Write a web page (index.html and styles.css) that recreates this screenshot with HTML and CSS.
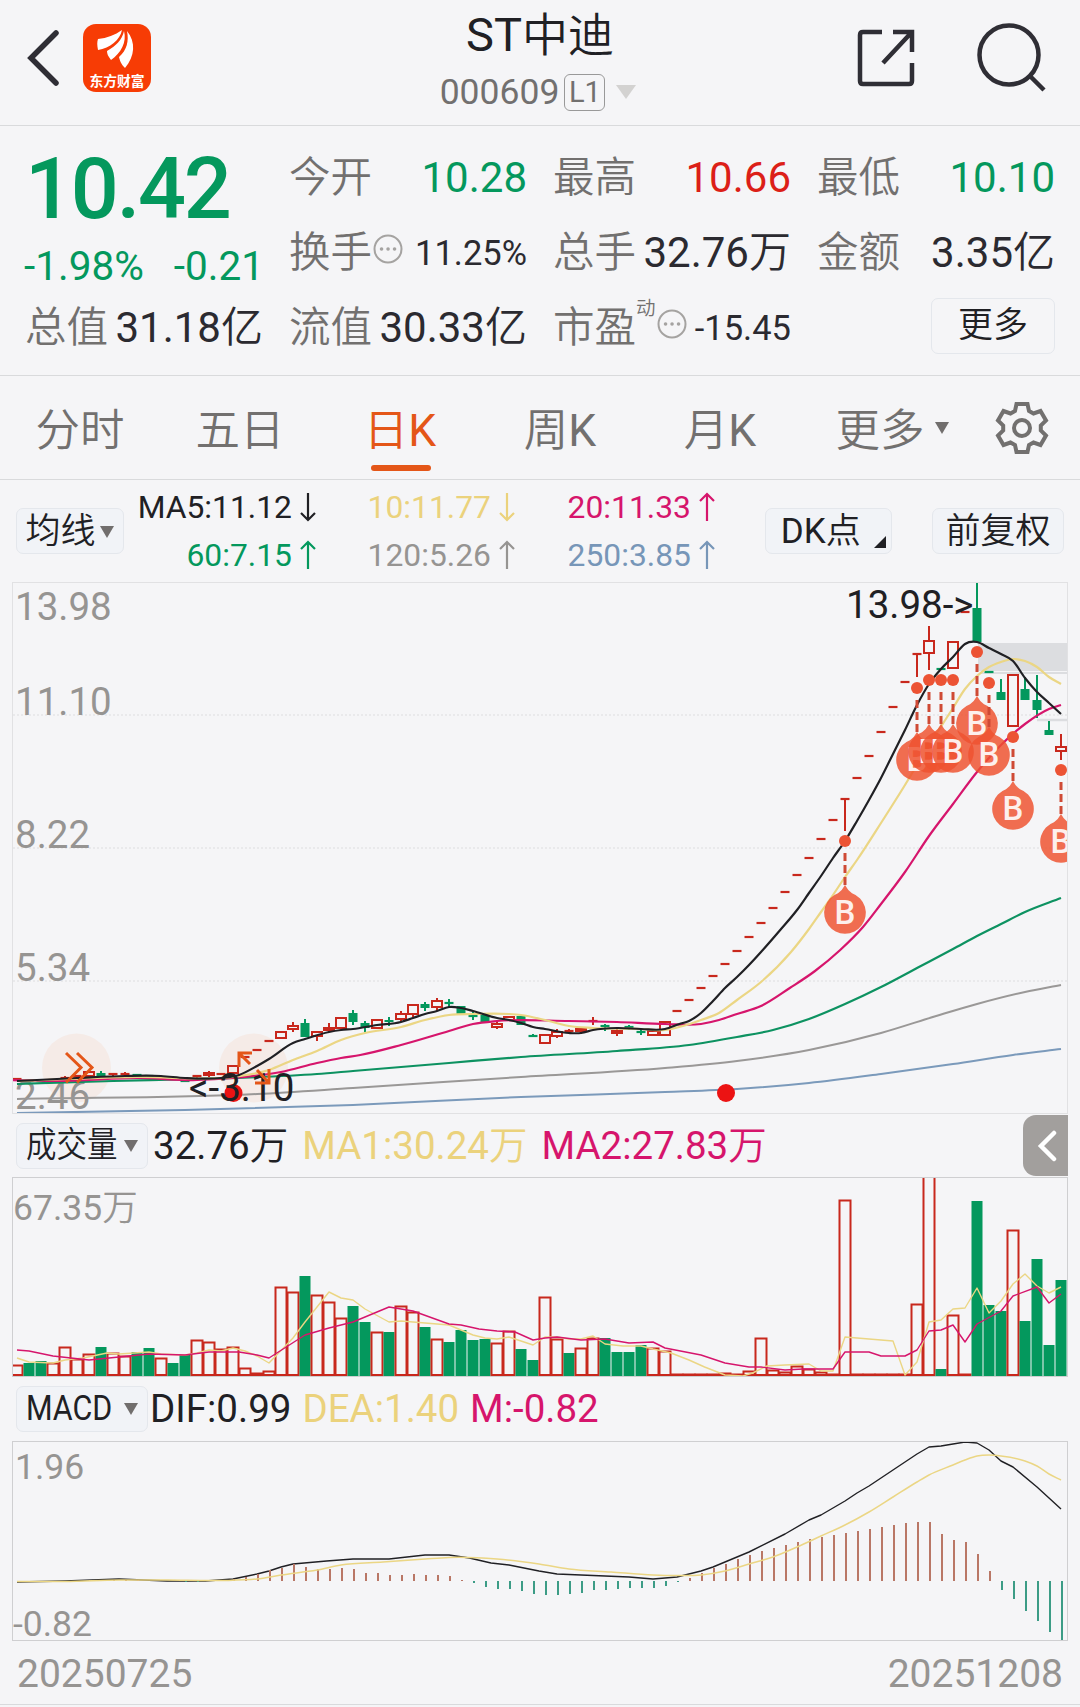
FILE: index.html
```
<!DOCTYPE html>
<html lang="zh-CN">
<head>
    <meta charset="utf-8">
    <title>ST中迪 000609</title>
    <link rel="stylesheet" href="styles.css">
</head>
<body>
    <header class="header">
        <div class="header-left">
            <svg class="back" width="34" height="60" viewBox="0 0 34 60"><path d="M30 5 5 30 30 55"/></svg>
            <div class="logo">
                <svg width="68" height="50" viewBox="0 0 68 50">
                    <path d="M15 26c-1-5-1-8 0-11 9-1 17-4 24-9-2 10-12 18-24 20z"/>
                    <path d="M28 36c-3-4-4-6-4-9 9-5 15-11 17-20 3 11-3 22-13 29z"/>
                    <path d="M42 44c-4-4-5-7-6-11 8-7 10-16 8-26 9 11 8 25-2 37z"/>
                </svg>
                <span>东方财富</span>
            </div>
        </div>
        <div class="title">
            <h1>ST<i>中迪</i></h1>
            <div class="code">000609<span class="level">L1</span><b class="tri"></b></div>
        </div>
        <div class="header-right">
            <svg width="64" height="64" viewBox="0 0 64 64"><path d="M27 6H8q-3 0-3 3v46q0 3 3 3h46q3 0 3-3V37M38 6h19v20M56 7 28 37"/></svg>
            <svg width="72" height="72" viewBox="0 0 72 72"><circle cx="33" cy="33" r="29.5"/><path d="M53 53 68 68"/></svg>
        </div>
    </header>

    <section class="quote">
        <div class="now">
            <div class="price">10.42</div>
            <div class="change"><span>-1.98%</span><span>-0.21</span></div>
        </div>
        <div class="cell"><i>今开</i><em class="green">10.28</em></div>
        <div class="cell"><i>最高</i><em class="red">10.66</em></div>
        <div class="cell"><i>最低</i><em class="green">10.10</em></div>
        <div class="cell"><i>换手</i><svg class="tip" width="30" height="30" viewBox="0 0 30 30"><circle cx="15" cy="15" r="13.5"/><path d="M8.500 15h.1M15 15h.1M21.500 15h.1"/></svg><em class="small">11.25%</em></div>
        <div class="cell"><i>总手</i><em>32.76<i>万</i></em></div>
        <div class="cell"><i>金额</i><em>3.35<i>亿</i></em></div>
        <div class="cell"><i>总值</i><em>31.18<i>亿</i></em></div>
        <div class="cell"><i>流值</i><em>30.33<i>亿</i></em></div>
        <div class="cell"><i>市盈</i><sup>动</sup><svg class="tip" width="30" height="30" viewBox="0 0 30 30"><circle cx="15" cy="15" r="13.5"/><path d="M8.500 15h.1M15 15h.1M21.500 15h.1"/></svg><em class="small">-15.45</em></div>
        <div class="cell"><button class="btn more">更多</button></div>
    </section>

    <nav class="tabs">
        <a><i>分时</i></a>
        <a><i>五日</i></a>
        <a class="active"><i>日</i>K</a>
        <a><i>周</i>K</a>
        <a><i>月</i>K</a>
        <a><i>更多</i><b class="tri"></b></a>
        <div class="gear">
            <svg width="54" height="54" viewBox="0 0 54 54"><path d="M21.500 3h11l1.500 7 4.500 2.500 7-2.500 5.500 9.500-5.200 5v5l5.200 5-5.500 9.500-7-2.500-4.500 2.500-1.500 7h-11l-1.500-7-4.500-2.500-7 2.500L3 34.500l5.200-5v-5L3 19.500 8.500 10l7 2.500L20 10z"/><circle cx="27" cy="27" r="8"/></svg>
        </div>
    </nav>

    <section class="ma">
        <button class="btn">均线<b class="tri"></b></button>
        <div class="ma-list">
            <span class="black">MA5:11.12<svg class="arrow down" viewBox="0 0 16 30"><path d="M8 29V2M1 9l7-7 7 7"/></svg></span>
            <span class="yellow">10:11.77<svg class="arrow down" viewBox="0 0 16 30"><path d="M8 29V2M1 9l7-7 7 7"/></svg></span>
            <span class="pink">20:11.33<svg class="arrow" viewBox="0 0 16 30"><path d="M8 29V2M1 9l7-7 7 7"/></svg></span>
            <span class="green">60:7.15<svg class="arrow" viewBox="0 0 16 30"><path d="M8 29V2M1 9l7-7 7 7"/></svg></span>
            <span class="gray">120:5.26<svg class="arrow" viewBox="0 0 16 30"><path d="M8 29V2M1 9l7-7 7 7"/></svg></span>
            <span class="blue">250:3.85<svg class="arrow" viewBox="0 0 16 30"><path d="M8 29V2M1 9l7-7 7 7"/></svg></span>
        </div>
        <button class="btn dk">DK<i>点</i><b class="corner"></b></button>
        <button class="btn">前复权</button>
    </section>

    <div class="chart price-chart"><svg id="price" viewBox="13 1 1054 530"></svg></div>

    <section class="bar">
        <button class="btn"><span class="narrow"><i>成交量</i></span><b class="tri"></b></button>
        <span class="black">32.76<i>万</i></span>
        <span class="yellow">MA1:30.24<i>万</i></span>
        <span class="pink">MA2:27.83<i>万</i></span>
        <div class="fold"><svg width="20" height="32" viewBox="0 0 20 32"><path d="M17 3 4 16 17 29"/></svg></div>
    </section>
    <div class="chart"><svg id="volume" viewBox="13 1 1054 198"></svg></div>

    <section class="bar macd-bar">
        <button class="btn"><span class="narrow">MACD</span><b class="tri"></b></button>
        <span class="black">DIF:0.99</span>
        <span class="yellow">DEA:1.40</span>
        <span class="pink">M:-0.82</span>
    </section>
    <div class="chart"><svg id="macd" viewBox="13 1 1054 198"></svg></div>

    <footer class="dates"><span>20250725</span><span>20251208</span></footer>
    <script src="chart.js"></script>
</body>
</html>
```
FILE: styles.css
```
* {
    padding: 0;
    margin: 0;
    box-sizing: border-box;
}
body {
    width: 1080px;
    height: 1707px;
    overflow: hidden;
    background-color: #f5f5f7;
    color: #2b2a30;
    font-family: Roboto, "Noto Sans CJK SC", sans-serif;
}
i, em {
    font-style: normal;
}
i, .btn, sup {
    font-weight: 350;
}
svg {
    display: block;
    fill: none;
    flex: none;
}
.black { color: #202024; }
.yellow { color: #ebd27c; }
.pink { color: #d6156c; }
.green { color: #04985d; }
.red { color: #dc1f18; }
.gray { color: #969492; }
.blue { color: #7796b8; }

.tri {
    border: 7.5px solid transparent;
    border-top: 12px solid #716e6d;
    border-bottom: 0;
}
.btn {
    height: 46px;
    display: flex;
    align-items: center;
    justify-content: center;
    border: 1px solid #e4e7ec;
    border-radius: 7px;
    background-color: #f1f3f7;
    color: #202024;
    font-family: inherit;
    font-size: 35px;
    line-height: 44px;
    white-space: nowrap;
}

/* header */
.header {
    height: 126px;
    display: grid;
    grid-template-columns: 300px 480px 300px;
    border-bottom: 1px solid #d9dadc;
}
.header-left {
    display: flex;
    align-items: flex-start;
    padding: 24px 0 0 26px;
}
.back {
    margin-top: 4px;
    margin-right: 23px;
    stroke: #2f2e35;
    stroke-width: 5.5;
    stroke-linecap: round;
}
.logo {
    width: 68px;
    height: 68px;
    border-radius: 13px;
    background-color: #f73c05;
    color: #fff;
    text-align: center;
}
.logo svg {
    fill: #fff;
}
.logo span {
    display: block;
    font-size: 13.800px;
    font-weight: 700;
    line-height: 15px;
}
.title {
    text-align: center;
}
.title h1 {
    height: 70px;
    font-size: 47px;
    line-height: 70px;
    font-weight: 400;
    color: #202024;
}
.title h1 i {
    font-size: 46px;
}
.code {
    display: flex;
    align-items: center;
    justify-content: center;
    height: 44px;
    margin-left: -4px;
    font-size: 35.500px;
    color: #72706f;
}
.level {
    width: 41px;
    height: 37px;
    margin-left: 5px;
    border: 1.500px solid #999;
    border-radius: 6px;
    font-size: 29px;
    line-height: 35px;
}
.code .tri {
    margin-left: 11px;
    border-width: 14px 10.500px 0;
    border-top-color: #d3d2d1;
}
.header-right {
    display: flex;
    padding: 22px 0 0 75px;
    gap: 57px;
}
.header-right svg {
    stroke: #2f2e35;
    stroke-width: 4.500;
}
.header-right svg:first-child {
    margin-top: 4px;
}

/* quote */
.quote {
    height: 250px;
    padding: 14px 24px 0 25px;
    display: grid;
    grid-template-columns: repeat(4, 238px);
    grid-template-rows: 75px 75px 76px;
    column-gap: 26px;
    border-bottom: 1px solid #d9dadc;
}
.now {
    grid-row: span 2;
    color: #04985d;
}
.price {
    height: 98px;
    line-height: 100px;
    font-size: 84.500px;
    font-weight: 500;
    letter-spacing: -2.200px;
}
.change {
    display: flex;
    justify-content: space-between;
    margin: 4px -1px 0 -1px;
    line-height: 48px;
    font-size: 40.500px;
}
.cell {
    display: flex;
    align-items: center;
    font-size: 42px;
    line-height: 70px;
    white-space: nowrap;
}
.cell > i {
    color: #72706f;
    font-size: 41.500px;
}
.cell em {
    margin-left: auto;
}
.cell em.small {
    font-size: 34.500px;
}
.cell sup {
    align-self: flex-start;
    font-size: 19.500px;
    line-height: 20px;
    color: #72706f;
    margin-top: 9px;
}
.tip {
    margin: -8px 0 0 1px;
    stroke: #a5a3a1;
    stroke-width: 2;
    stroke-linecap: round;
}
.tip path {
    stroke-width: 3.500;
}
.more {
    width: 124px;
    height: 56px;
    margin: -5px 0 0 auto;
    background: none;
}

/* tabs */
.tabs {
    height: 104px;
    display: flex;
    border-bottom: 1px solid #d9dadc;
    color: #72706f;
    font-size: 44.500px;
    line-height: 110px;
}
.tabs a {
    position: relative;
    width: 160px;
    text-align: center;
}
.tabs a .tri {
    position: absolute;
    left: 135px;
    top: 46px;
}
.tabs .active {
    color: #e45618;
}
.active::after {
    content: "";
    position: absolute;
    left: 51px;
    top: 89px;
    width: 60px;
    height: 6px;
    border-radius: 3px;
    background-color: #e45618;
}
.gear {
    width: 120px;
    padding: 25px 0 0 35px;
}
.gear svg {
    stroke: #72706f;
    stroke-width: 4;
}

/* moving averages */
.ma {
    height: 102px;
    display: flex;
    align-items: center;
    padding: 0 16px;
}
.ma > .btn {
    padding-top: 2px;
}
.ma > .btn:first-child {
    width: 108px;
}
.ma > .btn:last-child {
    width: 132px;
    margin-left: 40px;
}
.ma .tri {
    margin-left: 5px;
}
.ma > .dk {
    position: relative;
    width: 127px;
    padding-right: 16px;
    font-weight: 400;
}
.corner {
    position: absolute;
    right: 5px;
    bottom: 5px;
    border-left: 12px solid transparent;
    border-bottom: 12px solid #202024;
}
.ma-list {
    width: 642px;
    display: grid;
    grid-template-columns: 192px 199px 200px;
    grid-template-rows: 48px 48px;
    font-size: 31.800px;
    line-height: 50px;
}
.ma-list span {
    display: flex;
    align-items: center;
    justify-content: flex-end;
}
.arrow {
    width: 16px;
    height: 30px;
    margin-left: 8px;
    stroke: currentColor;
    stroke-width: 2.200;
}
.down {
    transform: rotate(180deg);
}

/* charts */
.chart {
    height: 200px;
    margin: 0 12px;
    border: 1px solid #cfcfd1;
}
.price-chart {
    height: 532px;
    border: 1px solid #e1e1e3;
}
.chart svg {
    width: 1054px;
    height: 100%;
}
.chart text {
    font-size: 35.500px;
    fill: #969492;
}
.price-chart text {
    font-size: 38.500px;
}
.chart .mark {
    fill: #202024;
}
.chart .buy {
    font-size: 33px;
    font-weight: 500;
    fill: #fff;
    text-anchor: middle;
    opacity: .9;
}
.bar {
    position: relative;
    height: 63px;
    display: flex;
    align-items: center;
    padding-left: 16px;
    font-size: 38.500px;
    line-height: 60px;
    white-space: nowrap;
}
.bar .btn {
    width: 132px;
    margin-right: 5px;
}
.bar > span {
    margin-right: 14px;
}
.bar .tri {
    margin-left: 8px;
}
.macd-bar {
    height: 64px;
}
.macd-bar .btn {
    margin-right: 2px;
}
.macd-bar > span {
    margin-right: 11px;
}
.narrow {
    width: 90px;
    transform: scaleX(.87);
    transform-origin: left;
    font-weight: 400;
}
.fold {
    position: absolute;
    right: 12px;
    top: 1px;
    width: 45px;
    height: 61px;
    padding: 15px 0 0 14px;
    border-radius: 13px 0 0 13px;
    background-color: #a29f9d;
}
.fold svg {
    stroke: #fff;
    stroke-width: 4.500;
    stroke-linecap: round;
}
.dates {
    height: 64px;
    display: flex;
    justify-content: space-between;
    padding: 0 17px;
    border-bottom: 1px solid #d9dadc;
    font-size: 39px;
    line-height: 67px;
    color: #969492;
}
```
FILE: chart.js
```
var RED = "#c8281d";
var GREEN = "#04985d";
var BLACK = "#202024";
var YELLOW = "#ebd684";
var PINK = "#d6156c";

// x of the i-th trading day
function cx(i) {
    return 17 + 12 * i;
}
function rect(x, y, w, h, attr) {
    return '<rect x="' + x + '" y="' + y + '" width="' + w + '" height="' + h + '" ' + attr + '/>';
}
function seg(x1, y1, x2, y2, color, w, extra) {
    return '<path d="M' + x1 + ' ' + y1 + 'L' + x2 + ' ' + y2 + '" stroke="' + color + '" stroke-width="' + w + '" ' + (extra || '') + '/>';
}
// data: "day,y day,y ..."
function parse(data) {
    return data.split(" ").map(function(p) {
        p = p.split(",");
        return [cx(+p[0]), +p[1]];
    });
}
function line(data, color, w) {
    return '<polyline points="' + parse(data).join(" ") + '" stroke="' + color + '" stroke-width="' + w + '" stroke-linejoin="round"/>';
}
// slope at every point is the weighted mean of the two sides
function curve(data, color, w) {
    var p = parse(data);
    var n = p.length;
    function slope(i) {
        return (p[i + 1][1] - p[i][1]) / (p[i + 1][0] - p[i][0]);
    }
    var m = p.map(function(q, i) {
        if (i == 0) return slope(0);
        if (i == n - 1) return slope(n - 2);
        var a = p[i][0] - p[i - 1][0];
        var b = p[i + 1][0] - p[i][0];
        return (slope(i - 1) * b + slope(i) * a) / (a + b);
    });
    var d = "M" + p[0];
    for (var i = 1; i < n; i++) {
        var h = (p[i][0] - p[i - 1][0]) / 3;
        d += "C" + [p[i - 1][0] + h, p[i - 1][1] + m[i - 1] * h, p[i][0] - h, p[i][1] - m[i] * h, p[i][0], p[i][1]];
    }
    return '<path d="' + d + '" stroke="' + color + '" stroke-width="' + w + '"/>';
}
function text(x, y, s, cls) {
    return '<text x="' + x + '" y="' + y + '" class="' + (cls || '') + '">' + s + '</text>';
}

/* ---------- price ---------- */
// day, up(1)/down(0), high, body top, body bottom, low
var candles = [
    [0,1,497,497,497,497],[1,0,499,499,499,499],[2,0,499,499,499,499],[3,1,498,498,498,498],
    [4,1,494,496,497,499],[5,1,494,494,494,494],[6,1,489,490,494,494],[7,0,489,491,494,496],
    [8,1,491,492,493,495],[9,1,490,492,493,495],[10,0,492,493,494,494],[11,0,494,494,494,494],
    [12,1,496,496,496,496],[13,0,497,497,497,497],[14,0,499,499,499,499],[15,1,494,494,495,496],
    [16,1,489,491,493,495],[17,1,492,492,492,492],[18,1,484,484,491,491],[19,1,475,475,475,475],
    [20,1,468,468,468,468],[21,1,459,459,459,459],[22,1,450,450,456,456],[23,1,440,444,447,450],
    [24,0,437,441,455,455],[25,1,450,450,454,459],[26,1,441,446,448,450],[27,1,436,436,446,446],
    [28,0,428,431,440,443],[29,0,439,441,446,450],[30,1,438,438,446,446],[31,0,435,438,440,444],
    [32,1,429,432,437,440],[33,1,423,423,432,435],[34,0,420,422,426,429],[35,1,416,419,425,429],
    [36,0,417,421,422,426],[37,0,424,424,432,432],[38,0,430,434,435,438],[39,0,433,433,440,440],
    [40,1,438,442,445,447],[41,1,434,435,438,438],[42,0,434,434,443,443],[43,0,452,454,454,455],
    [44,1,453,453,461,461],[45,1,447,450,454,456],[46,1,447,449,450,452],[47,1,446,447,449,452],
    [48,1,435,439,440,443],[49,0,442,444,445,449],[50,1,447,449,451,454],[51,0,443,445,446,448],
    [52,0,447,450,450,453],[53,1,448,449,453,453],[54,1,439,440,453,453],[55,1,429,429,429,429],
    [56,1,418,418,418,418],[57,1,406,406,406,406],[58,1,394,394,394,394],[59,1,382,382,382,382],
    [60,1,369,369,369,369],[61,1,355,355,355,355],[62,1,341,341,341,341],[63,1,326,326,326,326],
    [64,1,310,310,310,310],[65,1,293,293,293,293],[66,1,276,276,276,276],[67,1,257,257,257,257],
    [68,1,238,238,238,238],[69,1,217,217,217,249],[70,1,196,196,196,196],[71,1,174,174,174,174],
    [72,1,150,150,150,150],[73,1,125,125,125,125],[74,1,100,100,100,100],[75,1,72,72,72,95],
    [76,1,44,59,71,88],[77,0,87,87,87,87],[78,1,60,60,86,86],[79,1,30,30,30,30],
    [80,0,0,26,60,60],[81,0,90,90,90,90],[82,0,97,110,118,118],[83,1,93,93,144,144],
    [84,0,95,107,118,118],[85,0,93,118,128,136],[86,0,139,148,153,153],[87,1,152,165,169,178]
];
// day and y of the signal dot, the pin hangs below it
var buys = [[69,259],[75,106],[76,98],[77,98],[78,98],[80,70],[81,101],[83,155],[87,188]];

function drawPrice() {
    var s = "";
    [133, 266, 399].forEach(function(y) {
        s += seg(13, y, 1067, y, "#e5e5e7", 1.5, 'stroke-dasharray="2 2"');
    });
    s += '<circle cx="76.500" cy="486" r="34.500" fill="#f5ebe7"/><circle cx="253.500" cy="486" r="34.500" fill="#f5ebe7"/>';
    s += rect(978, 61, 90, 28, 'fill="#dcdde0"');
    s += seg(980, 91, 1067, 91, "#dcdde0", 2) + seg(1037, 138, 1067, 138, "#dcdde0", 2.5);
    ["13.98", "11.10", "8.22", "5.34", "2.46"].forEach(function(t, i) {
        s += text(15, [38, 133, 266, 399, 527][i], t);
    });
    candles.forEach(function(c) {
        var x = cx(c[0]);
        var color = c[1] ? RED : GREEN;
        if (c[4] - c[3] < 2) {
            s += seg(x - 4.5, c[3], x + 4.5, c[3], color, 2.2);
            if (c[5] > c[2]) {
                s += seg(x, c[2], x, c[5], color, 2);
            }
            return;
        }
        s += seg(x, c[2], x, c[3], color, 2) + seg(x, c[4], x, c[5], color, 2);
        if (c[1]) {
            s += rect(x - 5, c[3], 10, c[4] - c[3], 'stroke="' + color + '" stroke-width="2"');
        } else {
            s += rect(x - 4.5, c[3], 9, c[4] - c[3], 'fill="' + color + '"');
        }
    });
    s += curve("0,531 14,528 28,523 42,515 54,510 60,507 66,501 72,492 78,482 83,473 87,467", "#7b9abb", 2);
    s += curve("0,517 20,512 28,506 42,495 54,486 60,479 66,468 72,451 76.6,434 80,422 84,410 87,403", "#9a9897", 2);
    s += curve("0,502 8,499 15,497 25,492 28,489 32,485 36,481 42,475 50,469 56,463 60,455 63,448 66,437 69,422 72,405 75,386 78,367 80,354 82,342 84,330 87,316", "#0d9261", 2.2);
    s += curve("-.5,498 4,499 10,496 15,498 18,496 22,490 25,481 27,476 28.6,473 32,463 36,449 38,442 40,439 46,439 50,440 54,442 57,442 58.5,438 60,432 62,424 64.4,406 66.5,389 68.6,368 70.5,345 72,322 74,290 76,254 78,222 80,190 82,163 84,142 86,127 87,123", PINK, 2.2);
    s += curve("0,499 10,495 18,495 21,488 23,478 25,469 27,458 29,451 32,445 34,438 36,433 38,432 41,432 42,433 44,438 46,444 48,446 52,447 54,448 55.5,444 57,438 58.5,431 60,418 62,400 64.5,370 66,347 67,330 68,313 69,295 70,278 72,241 74,203 76,163 78,126 79,107 80,94 81,85 82,80 83,77 84,79 85,85 86,95 87,102", YELLOW, 2.2);
    s += curve("0,499 5,496 9,494 12,494 14,496 17,496 18.5,493 20,484 21,477 23,461 24,457 26,450 27,448 28,447 30,443 32,440 33,436 34,432 35,429 36,425 37,426 38,429 40,436 41,438 42,441 43,445 44,447 46,451 47,451 48,448 50,446 52,447 54,447 55.2,442 56,439 57,431 58,419 59,406 60,395 61,383 62,370 63.6,348 65,328 66,311 67,294 68,276 69,259 70,239 71,218 72,196 73,172 74,148 75,123 76,102 77,87 78,75 79,62 80,60 81,66 82,72 83,79 84,96 85,110 86,121 87,132", BLACK, 2.2);
    s += '<circle cx="233.500" cy="511" r="9" fill="#ec1313"/><circle cx="726" cy="511" r="9" fill="#ec1313"/>';
    s += text(846, 36, "13.98-&gt;", "mark") + text(189, 519, "&lt;-3.10", "mark");
    s += '<path d="M66 471l15 14.500-15 15M77 471l15 14.500-15 15M239 485v-14h13M240 472l10 10M257 488l11 12M269 487v14h-14" stroke="#e45618" stroke-width="3"/>';
    buys.forEach(function(b) {
        var x = cx(b[0]);
        var y = b[1];
        var py = y + 72;
        s += '<circle cx="' + x + '" cy="' + y + '" r="6" fill="#ec5334"/>';
        s += seg(x, y + 12, x, py - 28, "#cf4a35", 3, 'stroke-dasharray="8 4"');
        s += '<path d="M' + x + ' ' + (py - 28) + 'q2.500 5 7 8.300a20.800 20.800 0 1 1-14 0q4.500-3.300 7-8.300z" fill="#ee5230" fill-opacity=".84"/>';
        s += text(x, py + 11, "B", "buy");
    });
    document.getElementById("price").innerHTML = s;
}

/* ---------- volume ---------- */
// bar heights, negative = down day
var volumes = [
    10,-13,-15,12,28,16,21,-29,22,19,-24,-28,17,-13,-21,35,33,26,28,7,2,4,88,83,-100,80,73,57,-70,-54,
    43,-44,69,63,-49,36,-34,-46,-36,-37,32,44,-27,-16,78,36,-23,27,37,-38,-24,-24,-31,27,24,1,1,1,1,2,
    1,4,37,5,3,9,6,3,1,175,1,1,1,1,1,71,210,-7,60,1,-175,-71,-65,145,-55,-117,-31,-96
];

function drawVolume() {
    var s = text(13, 43, "67.35<tspan font-weight=\"350\">万</tspan>");
    volumes.forEach(function(v, i) {
        var h = Math.abs(v);
        if (v < 0) {
            s += rect(cx(i) - 5.5, 199 - h, 11, h, 'fill="' + GREEN + '"');
        } else {
            s += rect(cx(i) - 5.5, 198 - h + .5, 11, h - .5, 'stroke="' + RED + '" stroke-width="2"');
        }
    });
    s += line("0,181 1,185 3,186 4,183 5.5,181 7.5,176 8.5,177 11,175 12,177 14,178 15,176 16,173 17,174 18,171 19,174 20,179 21,186 23,161 24,145 26,115 27,121 28,123 29,132 31,145 32,144 34,146 36,148 38,158 39,161 40,162 41,160 43,168 44,160 45,160 46,162 47,162 48,159 49,167 50.5,169 52,169 53,172 54.5,176 56,183 57.3,190 59,198 60.5,199 61.3,196 62.5,189 64,188 66,187 67,194 68,194 69,160 73,164 74,198 75,185 76,145 77,143 78,132 79,131 80,111 81,136 82,124 83,107 84,97 85,109 86,116 87,110", YELLOW, 1.4);
    s += line("0,173 1,174 3,179 6,183 8.5,180 11,177 14,178 16,175 18.5,175 20,178 21,181 24,158 26,151 28,145 31,130 33,134 36,147 37,148 38.5,152 40,154 41.5,155 43,163 44,161 45,160 47,163 49,162 51,166 53,165 54,171 57,178 59,186 61,190 62,190 64,193 65.5,192 68,192 69,175 71,175 72,179 74,179 75,173 76,154 77,153 78,148 79,165 80,147 82,134 83,119 85,110 86,126 87,117", PINK, 1.4);
    document.getElementById("volume").innerHTML = s;
}

/* ---------- macd ---------- */
var hist = [
    -1,-1,-1,-1,-1,0,1,1,1,1,1,0,0,0,-1,-1,0,1,2,4,7,11,13,17,14,12,12,13,12,8,
    8,6,6,7,6,6,5,1,-2,-6,-8,-8,-10,-13,-14,-14,-13,-12,-9,-9,-8,-7,-7,-7,-5,-1,3,8,13,17,
    22,26,30,33,36,39,42,44,46,48,50,52,54,56,58,59,59,47,41,39,27,10,-9,-18,-30,-40,-51,-60
];

function drawMacd() {
    var s = text(15, 38, "1.96") + text(13, 195, "-0.82");
    s += line("0,141 4,140 8.5,138 12.5,140 15.7,140 18,138 20,133 21,130 22,126 23,123 25.8,120 28,118 31,118 34,114 36,114 37.7,117 39.5,122 41,124 43.5,130 45,133 47,134 49,135 51,136 53,138 55,136 57,130 58,126 61,111 64,93 66,79 67,74 69,60 70,52 71,45 73,29 75,13 76,6 77,5 78,3 79,1 80,2 81,9 82,20 83,26 85,46 86,57 87,68", BLACK, 1.4);
    hist.forEach(function(v, i) {
        if (v) {
            s += seg(cx(i) + 1, 140, cx(i) + 1, 140 - v, v > 0 ? "#b97766" : "#3c9c86", 2);
        }
    });
    s += curve("0,140.5 4,140.5 8.5,139 12.5,139 17,139.5 20,138 22,134 25,129 27,124 30.5,121 34,118 36,116.5 40,118 43.5,123 46,128 49.5,131 53,134 55,134.5 57,134 59,130 61,123 63,116 65,106 67,95 69,84 71,71 73,56 75,41 76,34 78,24 79,19 80,15 81,14 82,15 84,20 85,25 86,33 87,39", YELLOW, 1.5);
    document.getElementById("macd").innerHTML = s;
}

drawPrice();
drawVolume();
drawMacd();
```
